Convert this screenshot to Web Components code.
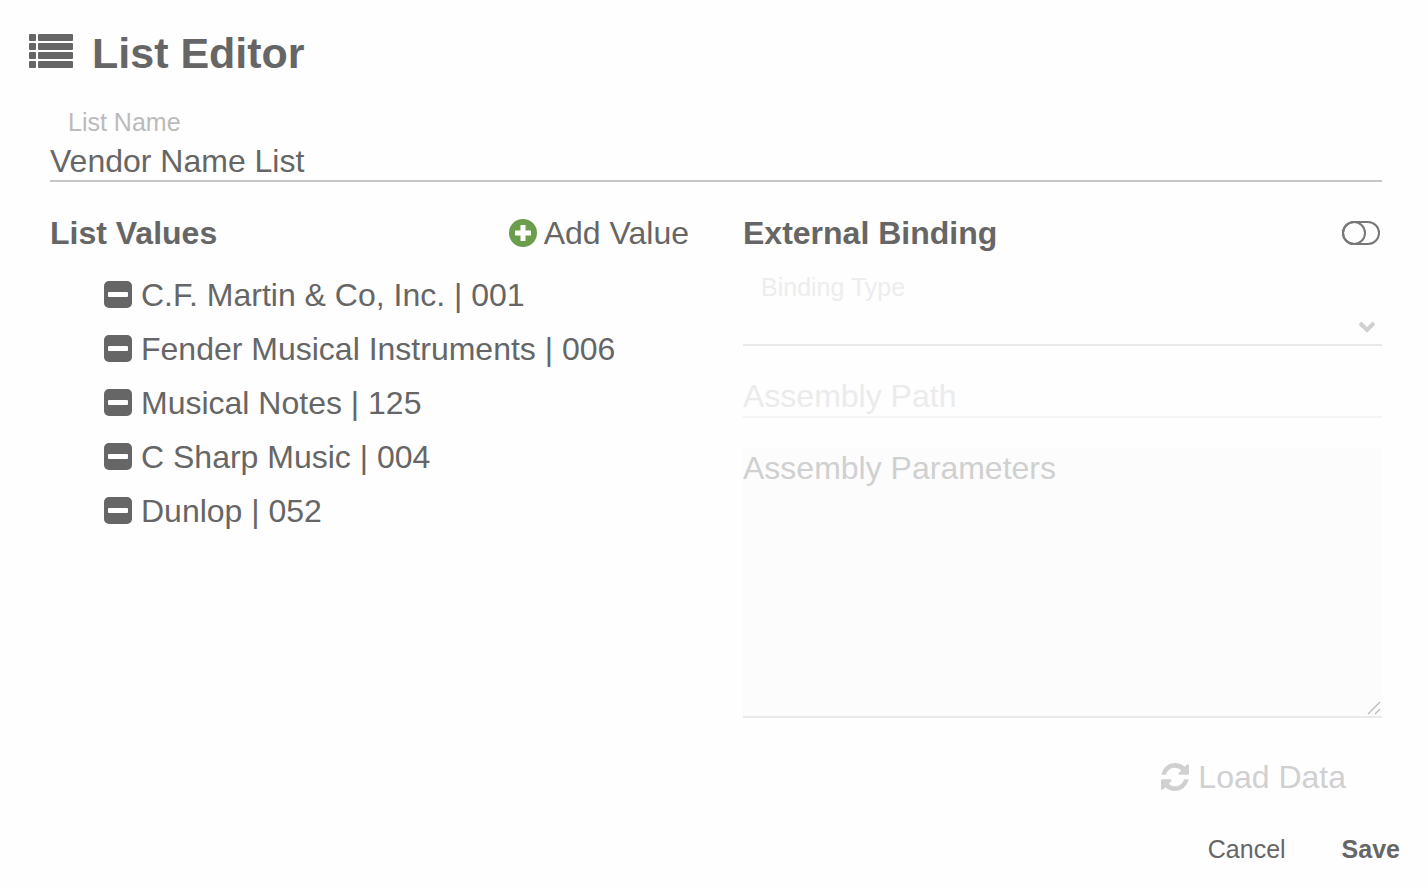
<!DOCTYPE html>
<html lang="en">
<head>
<meta charset="utf-8">
<meta name="viewport" content="width=device-width, initial-scale=1">
<title>List Editor</title>
<style>
  body { margin: 0; background: #fefefe; color: #666; font: 32px/40px "Liberation Sans", Arial, sans-serif; }
</style>
</head>
<body>
<list-editor></list-editor>

<template id="list-editor">
  <style>
    :host { display: block; padding: 27px 28px 18px; }
    header { display: flex; align-items: center; gap: 18px; padding-left: 1px; }
    header svg { width: 45px; height: 36px; margin-bottom: 4px; fill: currentColor; }
    h1 { margin: 0; font-size: 43px; line-height: 52px; }
    main { padding: 27px 18px 0 22px; }
    .columns { display: grid; grid-template-columns: 1fr 1fr; gap: 54px; margin-top: 24px; }
    footer { display: flex; justify-content: flex-end; gap: 56px; margin-top: 32px; }
    footer button { border: 0; padding: 0; background: none; color: inherit; font: 25px/40px "Liberation Sans", Arial, sans-serif; cursor: pointer; }
    footer .save { font-weight: bold; }
  </style>
  <header>
    <svg viewBox="0 0 45 36" aria-hidden="true">
      <rect x="0" y="1" width="7" height="7" rx="1"/><rect x="9" y="1" width="35" height="7" rx="1"/>
      <rect x="0" y="10" width="7" height="7" rx="1"/><rect x="9" y="10" width="35" height="7" rx="1"/>
      <rect x="0" y="19" width="7" height="7" rx="1"/><rect x="9" y="19" width="35" height="7" rx="1"/>
      <rect x="0" y="28" width="7" height="7" rx="1"/><rect x="9" y="28" width="35" height="7" rx="1"/>
    </svg>
    <h1>List Editor</h1>
  </header>
  <main>
    <text-field label="List Name" value="Vendor Name List"></text-field>
    <div class="columns">
      <list-values>
        <list-item>C.F. Martin &amp; Co, Inc. | 001</list-item>
        <list-item>Fender Musical Instruments | 006</list-item>
        <list-item>Musical Notes | 125</list-item>
        <list-item>C Sharp Music | 004</list-item>
        <list-item>Dunlop | 052</list-item>
      </list-values>
      <external-binding></external-binding>
    </div>
  </main>
  <footer>
    <button type="button">Cancel</button>
    <button type="button" class="save">Save</button>
  </footer>
</template>

<template id="text-field">
  <style>
    :host { display: block; }
    label { display: block; padding-left: 18px; font-size: 25px; line-height: 32px; color: #bbb; }
    input { display: block; box-sizing: border-box; width: 100%; height: 44px; margin: 0; padding: 4px 0 0; border: 0; border-bottom: 2px solid #c6c6c6; border-radius: 0; background: none; color: inherit; font: inherit; outline: 0; }
  </style>
  <label for="field"></label>
  <input id="field" type="text">
</template>

<template id="list-values">
  <style>
    :host { display: block; }
    .head { display: flex; align-items: center; justify-content: space-between; height: 54px; }
    h2 { margin: 0; font-size: 32px; }
    button { display: flex; align-items: center; gap: 7px; border: 0; padding: 0; background: none; color: inherit; font: inherit; cursor: pointer; }
    svg { width: 28px; height: 28px; }
    .items { padding: 8px 0 0 54px; }
  </style>
  <div class="head">
    <h2>List Values</h2>
    <button type="button">
      <svg viewBox="0 0 28 28" aria-hidden="true"><circle cx="14" cy="14" r="14" fill="#6b9e4c"/><path d="M14 6v16M6 14h16" stroke="#fff" stroke-width="5"/></svg>
      Add Value
    </button>
  </div>
  <div class="items" role="list"><slot></slot></div>
</template>

<template id="list-item">
  <style>
    :host { display: flex; align-items: center; gap: 9px; height: 54px; }
    button { display: block; border: 0; padding: 0; background: none; color: inherit; cursor: pointer; }
    svg { display: block; width: 28px; height: 28px; }
  </style>
  <button type="button" aria-label="Remove value">
    <svg viewBox="0 0 28 28" aria-hidden="true"><rect width="28" height="27" rx="5" fill="currentColor"/><rect x="4" y="11" width="20" height="5" rx="1" fill="#fff"/></svg>
  </button>
  <span><slot></slot></span>
</template>

<template id="external-binding">
  <style>
    :host { display: block; }
    .head { display: flex; align-items: center; justify-content: space-between; height: 54px; padding-right: 2px; }
    h2 { margin: 0; font-size: 32px; }
    .toggle { appearance: none; box-sizing: border-box; width: 38px; height: 24px; margin: 0; border: 2px solid #777; border-radius: 12px; }
    .toggle::before { content: ""; display: block; box-sizing: border-box; width: 24px; height: 24px; margin: -2px; border: 2px solid #777; border-radius: 50%; }
    .fields { display: flex; flex-direction: column; gap: 30px; padding-top: 11px; }
    label { display: block; padding-left: 18px; font-size: 25px; line-height: 32px; color: #ededed; }
    .select { position: relative; }
    .select svg { position: absolute; right: 5px; bottom: 12px; width: 20px; height: 14px; pointer-events: none; }
    select, input.path, textarea { display: block; box-sizing: border-box; width: 100%; margin: 0; padding: 0; border: 0; border-radius: 0; color: #666; font: inherit; outline: 0; opacity: 1; }
    select { appearance: none; height: 43px; background: none; border-bottom: 2px solid #e9e9e9; }
    input.path { height: 42px; background: none; border-bottom: 2px solid #f4f4f4; }
    input.path::placeholder { color: #ebebeb; }
    textarea { height: 270px; resize: none; background: #fcfcfc; border-bottom: 2px solid #e9e9e9; }
    textarea::placeholder { color: #d0d0d0; }
    .area { position: relative; }
    .area svg { position: absolute; right: 1px; bottom: 3px; width: 14px; height: 14px; pointer-events: none; }
    .load { display: flex; align-items: center; gap: 9px; margin: 39px 36px 0 auto; border: 0; padding: 0; background: none; color: #d0d0d0; font: inherit; }
    .load svg { width: 28px; height: 28px; fill: currentColor; }
  </style>
  <div class="head">
    <h2>External Binding</h2>
    <input class="toggle" type="checkbox" role="switch" aria-label="External Binding">
  </div>
  <div class="fields">
    <div>
      <label for="type">Binding Type</label>
      <div class="select">
        <select id="type" disabled><option></option></select>
        <svg viewBox="0 0 20 14" aria-hidden="true"><path d="M3 3l7 7 7-7" fill="none" stroke="#d0d0d0" stroke-width="4"/></svg>
      </div>
    </div>
    <input class="path" type="text" placeholder="Assembly Path" aria-label="Assembly Path" disabled>
    <div class="area">
      <textarea placeholder="Assembly Parameters" aria-label="Assembly Parameters" disabled></textarea>
      <svg viewBox="0 0 14 14" aria-hidden="true"><path d="M1 13L13 1M8 13l5-5" fill="none" stroke="#bbb" stroke-width="1.3"/></svg>
    </div>
  </div>
  <button class="load" type="button" disabled>
    <svg viewBox="0 0 1536 1536" aria-hidden="true"><path d="M1511 928q0 5-1 7-64 268-268 434.500t-478 166.500q-146 0-282.500-55t-243.500-157l-129 129q-19 19-45 19t-45-19-19-45v-448q0-26 19-45t45-19h448q26 0 45 19t19 45-19 45l-137 137q71 66 161 102t187 36q134 0 250-65t186-179q11-17 53-117 8-23 30-23h192q13 0 22.500 9.500t9.500 22.500zm25-800v448q0 26-19 45t-45 19h-448q-26 0-45-19t-19-45 19-45l138-138q-148-137-349-137-134 0-250 65t-186 179q-11 17-53 117-8 23-30 23h-199q-13 0-22.500-9.500t-9.500-22.500v-7q65-268 270-434.500t480-166.500q146 0 284 55.500t245 156.500l130-129q19-19 45-19t45 19 19 45z"/></svg>
    Load Data
  </button>
</template>

<script>
  class TemplateElement extends HTMLElement {
    constructor() {
      super();
      const template = document.getElementById(this.localName);
      this.attachShadow({ mode: "open" }).append(template.content.cloneNode(true));
    }
  }

  class TextField extends TemplateElement {
    connectedCallback() {
      this.shadowRoot.querySelector("label").textContent = this.getAttribute("label");
      this.shadowRoot.querySelector("input").value = this.getAttribute("value") || "";
    }
  }

  class ListItem extends TemplateElement {
    connectedCallback() {
      this.setAttribute("role", "listitem");
      this.shadowRoot.querySelector("button").addEventListener("click", () => this.remove());
    }
  }

  class ListValues extends TemplateElement {
    connectedCallback() {
      this.shadowRoot.querySelector("button").addEventListener("click", () => {
        const item = document.createElement("list-item");
        item.textContent = "New Value";
        this.append(item);
      });
    }
  }

  customElements.define("text-field", TextField);
  customElements.define("list-item", ListItem);
  customElements.define("list-values", ListValues);
  customElements.define("external-binding", class extends TemplateElement {});
  customElements.define("list-editor", class extends TemplateElement {});
</script>
</body>
</html>
